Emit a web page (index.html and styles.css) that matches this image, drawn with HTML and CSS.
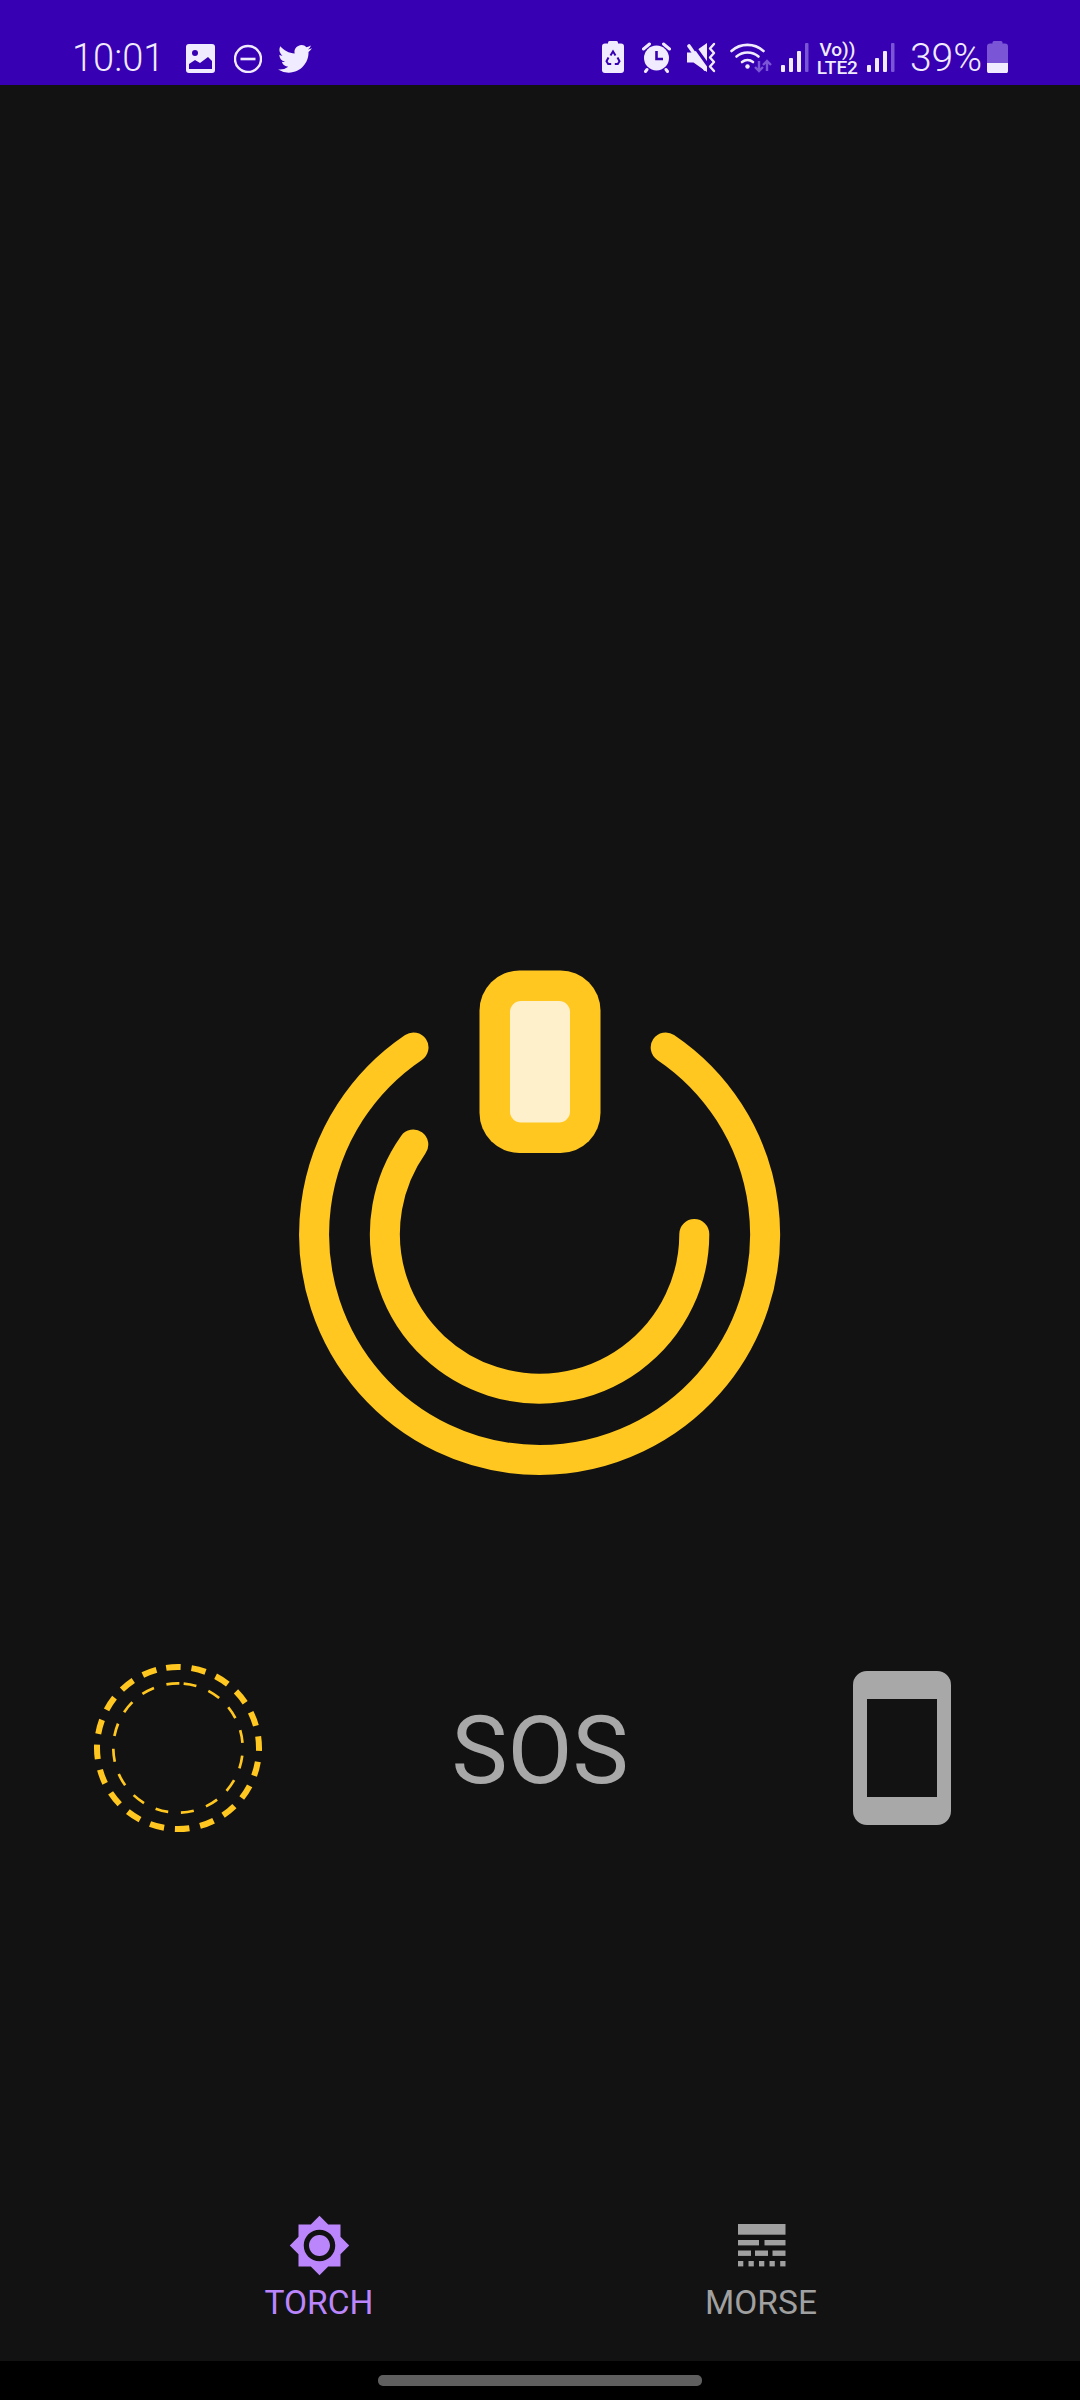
FILE: index.html
```html
<!DOCTYPE html>
<html lang="en">
<head>
<meta charset="utf-8">
<title>Torch</title>
<link rel="stylesheet" href="styles.css">
</head>
<body>
  <div class="status">
    <div class="status-group">
      <span class="time">10:01</span>

      <svg class="ico-image" width="29" height="32" viewBox="0 0 29 32">
        <rect y="3" width="29" height="29" rx="3" fill="#f1ebff"/>
        <circle cx="9" cy="12" r="3" fill="#3700b3"/>
        <path d="M3 28v-5l6-4 5 3 8-6 4 4v8z" fill="#3700b3"/>
      </svg>

      <svg class="ico-dnd" width="28" height="32" viewBox="0 0 28 32">
        <circle cx="14" cy="18" r="13" fill="none" stroke="#f1ebff" stroke-width="2.4"/>
        <rect x="6.5" y="16.7" width="15" height="2.6" fill="#f1ebff"/>
      </svg>

      <svg class="ico-twitter" width="34" height="29" viewBox="0 1.5 24 20.5">
        <path fill="#f1ebff" d="M23.953 4.57a10 10 0 01-2.825.775 4.958 4.958 0 002.163-2.723c-.951.555-2.005.959-3.127 1.184a4.92 4.92 0 00-8.384 4.482C7.69 8.095 4.067 6.13 1.64 3.162a4.822 4.822 0 00-.666 2.475c0 1.71.87 3.213 2.188 4.096a4.904 4.904 0 01-2.228-.616v.06a4.923 4.923 0 003.946 4.827 4.996 4.996 0 01-2.212.085 4.936 4.936 0 004.604 3.417 9.867 9.867 0 01-6.102 2.105c-.39 0-.779-.023-1.17-.067a13.995 13.995 0 007.557 2.209c9.053 0 13.998-7.496 13.998-13.985 0-.21 0-.42-.015-.63A9.935 9.935 0 0024 4.59z"/>
      </svg>
    </div>

    <div class="status-group">
      <svg class="ico-saver" width="22" height="32" viewBox="0 0 22 32">
        <rect x="6" width="10" height="4" rx="1.5" fill="#f1ebff"/>
        <rect y="2.5" width="22" height="29.5" rx="3" fill="#f1ebff"/>
        <g fill="none" stroke="#3700b3" stroke-width="2">
          <path d="M8.500 14.500l2.500-4 2.500 4"/>
          <path d="M15.500 16.500l2 3.700-1.700 2.800h-3"/>
          <path d="M6.500 16.500l-2 3.700 1.700 2.800h3"/>
        </g>
      </svg>

      <svg class="ico-alarm" width="29" height="32" viewBox="0 0 29 32">
        <circle cx="14.500" cy="17" r="12.500" fill="#f1ebff"/>
        <path d="M1.500 8l6-5M27.500 8l-6-5M5 28.500l-1.500 2M24 28.500l1.500 2" stroke="#f1ebff" stroke-width="3" stroke-linecap="round"/>
        <path d="M14.500 10v8h6.500" fill="none" stroke="#3700b3" stroke-width="2.600"/>
      </svg>

      <svg class="ico-mute" width="30" height="32" viewBox="0 0 30 32">
        <path d="M0 11.500h6.500L20 2v29L6.500 21.500H0z" fill="#f1ebff"/>
        <path d="M5 2l18 25" stroke="#3700b3" stroke-width="3"/>
        <path d="M2 5l16 23" stroke="#f1ebff" stroke-width="3.600" stroke-linecap="round"/>
        <path d="M27 3l-4 4.500 4 4.500-4 4.500 4 4.500-4 4.500 4 4.500" fill="none" stroke="#f1ebff" stroke-width="2.400" stroke-linecap="round" stroke-linejoin="round"/>
      </svg>

      <svg class="ico-wifi" width="42" height="32" viewBox="0 0 42 32">
        <g fill="none" stroke="#f1ebff" stroke-width="2.600" stroke-linecap="round">
          <path d="M1.500 10a24 24 0 0 1 32 0"/>
          <path d="M6.500 15.500a17 17 0 0 1 22 0"/>
          <path d="M12 21a9 9 0 0 1 11 0"/>
        </g>
        <circle cx="17.500" cy="25.500" r="2.200" fill="#f1ebff"/>
        <g fill="none" stroke="#7a55d6" stroke-width="2.400">
          <path d="M29 20v10M25 26l4 4 4-4"/>
          <path d="M37 30V20M33 24l4-4 4 4"/>
        </g>
      </svg>

      <svg class="ico-signal" width="28" height="32" viewBox="0 0 28 32">
        <rect y="24" width="4" height="7" rx="1" fill="#f1ebff"/>
        <rect x="8" y="17" width="4" height="14" rx="1" fill="#f1ebff"/>
        <rect x="16" y="10" width="4" height="21" rx="1" fill="#f1ebff"/>
        <rect x="24" y="2" width="3.500" height="29" rx="1" fill="#7a55d6"/>
      </svg>

      <div class="volte">
        <span>Vo))</span>
        <span>LTE2</span>
      </div>

      <svg class="ico-signal" width="28" height="32" viewBox="0 0 28 32">
        <rect y="24" width="4" height="7" rx="1" fill="#f1ebff"/>
        <rect x="8" y="17" width="4" height="14" rx="1" fill="#f1ebff"/>
        <rect x="16" y="10" width="4" height="21" rx="1" fill="#f1ebff"/>
        <rect x="24" y="2" width="3.500" height="29" rx="1" fill="#7a55d6"/>
      </svg>

      <span class="percent">39%</span>

      <svg class="ico-battery" width="21" height="32" viewBox="0 0 21 32">
        <rect x="5.500" width="10" height="4" rx="1.500" fill="#7a55d6"/>
        <rect y="2.500" width="21" height="30" rx="3" fill="#7a55d6"/>
        <path d="M0 22h21v7.500a3 3 0 0 1-3 3H3a3 3 0 0 1-3-3z" fill="#f1ebff"/>
      </svg>
    </div>
  </div>

  <div class="main">
    <svg class="power" width="490" height="515" viewBox="295 965 490 515">
      <g fill="none" stroke="#ffc71f" stroke-width="30" stroke-linecap="round">
        <path d="M413.500 1047.500A225.500 225.500 0 1 0 665.700 1047.500"/>
        <path d="M413.300 1144.600A154.700 154.700 0 1 0 694.300 1234"/>
      </g>
      <rect x="479.500" y="970.500" width="121" height="182.500" rx="40" fill="#ffc71f"/>
      <rect x="510" y="1001" width="60" height="121.500" rx="11" fill="#fff0cc"/>
    </svg>

    <div class="modes">
      <svg class="mode-strobe" width="176" height="176" viewBox="0 0 176 176">
        <g fill="none" stroke="#ffc71f">
          <circle cx="88" cy="88" r="81" stroke-width="6" stroke-dasharray="14.500 10.950" transform="rotate(-98.400 88 88)"/>
          <circle cx="88" cy="88" r="64.700" stroke-width="2.700" stroke-dasharray="13 12.900" transform="rotate(-85 88 88)"/>
        </g>
      </svg>
      <span class="mode-sos">SOS</span>
      <svg class="mode-screen" width="98" height="154" viewBox="0 0 98 154">
        <path fill="#a8a8a8" fill-rule="evenodd" d="M14 0h70a14 14 0 0 1 14 14v126a14 14 0 0 1-14 14H14a14 14 0 0 1-14-14V14A14 14 0 0 1 14 0zM14 28v98h70V28z"/>
      </svg>
    </div>

    <div class="tabs">
      <div class="tab tab-active">
        <svg width="63" height="63" viewBox="0 0 24 24">
          <path fill="#bb86fc" d="M20 8.690V4h-4.690L12 .69 8.690 4H4v4.690L.69 12 4 15.310V20h4.690L12 23.310 15.310 20H20v-4.690L23.310 12 20 8.690zM12 18c-3.310 0-6-2.690-6-6s2.690-6 6-6 6 2.690 6 6-2.690 6-6 6zm0-10c-2.210 0-4 1.790-4 4s1.790 4 4 4 4-1.790 4-4-1.790-4-4-4z"/>
        </svg>
        <span class="tab-label">TORCH</span>
      </div>
      <div class="tab">
        <svg width="63" height="63" viewBox="0 0 63 63">
          <g fill="#a0a0a0">
            <rect x="8" y="10" width="47.500" height="10.700"/>
            <rect x="8" y="26" width="21" height="5.400"/>
            <rect x="34.500" y="26" width="21" height="5.400"/>
            <rect x="8" y="36.500" width="13" height="5.400"/>
            <rect x="25" y="36.500" width="13" height="5.400"/>
            <rect x="42.500" y="36.500" width="13" height="5.400"/>
            <rect x="8" y="47" width="5.300" height="5.400"/>
            <rect x="18.500" y="47" width="5.300" height="5.400"/>
            <rect x="29" y="47" width="5.300" height="5.400"/>
            <rect x="39.500" y="47" width="5.300" height="5.400"/>
            <rect x="50.200" y="47" width="5.300" height="5.400"/>
          </g>
        </svg>
        <span class="tab-label">MORSE</span>
      </div>
    </div>
  </div>

  <div class="navbar"><div class="nav-pill"></div></div>
</body>
</html>
```

FILE: styles.css
```css
html, body { margin: 0; height: 100%; }
body {
  display: flex;
  flex-direction: column;
  background: #121212;
  font-family: Roboto, "Liberation Sans", sans-serif;
}

svg { display: block; flex: none; }

/* status bar */
.status {
  display: flex;
  justify-content: space-between;
  align-items: flex-start;
  height: 85px;
  box-sizing: border-box;
  padding: 41px 72px 0 72px;
  background: #3700b3;
  color: #f1ebff;
}
.status-group { display: flex; align-items: flex-start; }
.time { font-size: 38px; font-weight: 300; line-height: 32px; padding-top: 1px; }
.ico-image { margin-left: 22px; }
.ico-dnd { margin-left: 19px; }
.ico-twitter { margin-left: 16px; margin-top: 3px; }

.ico-alarm { margin-left: 18px; }
.ico-mute { margin-left: 16px; }
.ico-wifi { margin-left: 13px; }
.ico-signal { margin-left: 9px; }
.volte {
  display: flex;
  flex-direction: column;
  align-items: center;
  margin-left: 8px;
  width: 41px;
  font-size: 19px;
  font-weight: 500;
  line-height: 17.5px;
}
.percent { margin-left: 15px; font-size: 39px; font-weight: 300; line-height: 32px; padding-top: 1px; }
.ico-battery { margin-left: 5px; }

/* main area */
.main { flex: 1; display: flex; flex-direction: column; }
.power { margin: 880px auto 0; }
.modes {
  display: grid;
  grid-template-columns: repeat(3, 1fr);
  justify-items: center;
  align-items: center;
  margin-top: 180px;
}
.mode-strobe { margin-right: 4px; }
.mode-sos { font-size: 94.5px; color: #a8a8a8; line-height: 112px; padding-top: 6px; }
.mode-screen { margin-left: 3px; }

/* bottom tabs */
.tabs {
  display: grid;
  grid-template-columns: 1fr 1fr;
  padding: 0 98px;
  margin-top: auto;
  height: 147px;
  box-sizing: border-box;
}
.tab { display: flex; flex-direction: column; align-items: center; color: #a0a0a0; }
.tab-active { color: #bb86fc; }
.tab-label { font-size: 33.5px; line-height: 36px; margin-top: 8px; }

.navbar { height: 39px; background: #000; padding-top: 14px; box-sizing: border-box; }
.nav-pill { width: 324px; height: 11px; margin: 0 auto; border-radius: 5px; background: #5f5f5f; }
```
